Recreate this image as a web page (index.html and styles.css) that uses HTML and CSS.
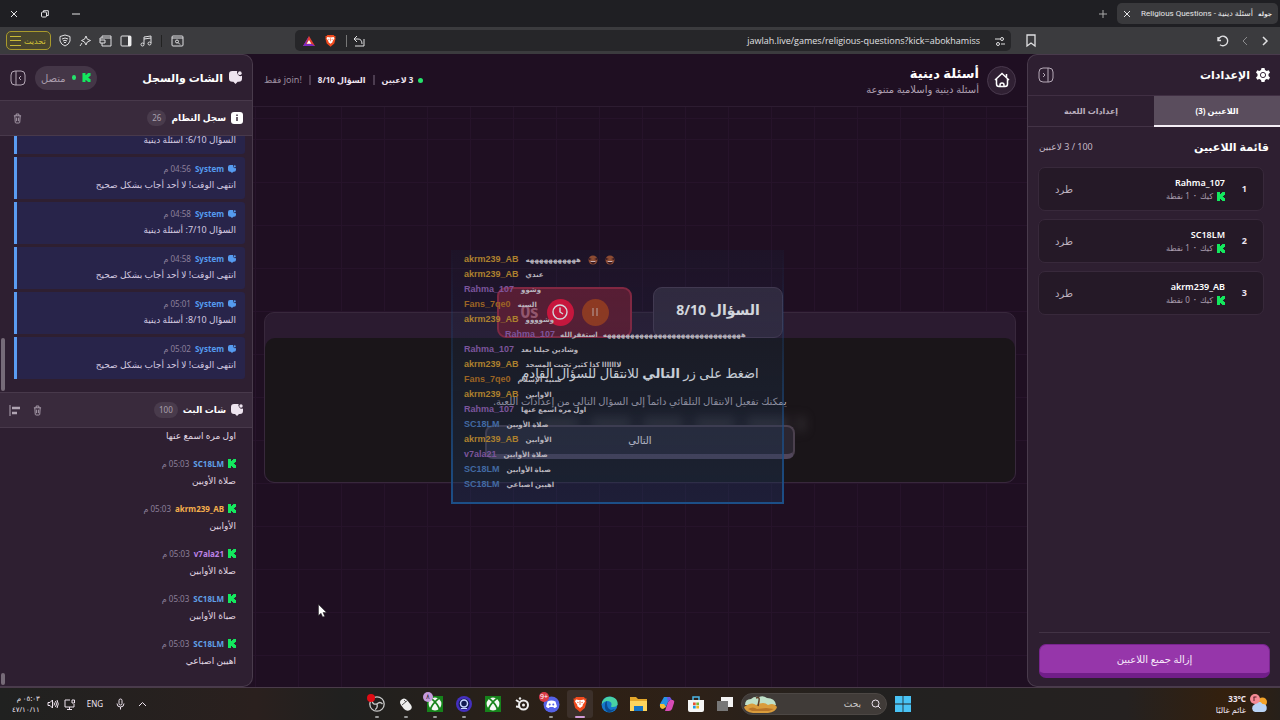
FILE: index.html
```html
<!DOCTYPE html>
<html lang="ar" dir="rtl">
<head>
<meta charset="utf-8">
<title>أسئلة دينية - Religious Questions</title>
<link rel="stylesheet" href="styles.css">
</head>
<body>
<svg class="defs" aria-hidden="true">
  <symbol id="kick" viewBox="0 0 9 10"><path fill="#14e85e" d="M0 0h3.4v2.3h1.1V1.1h1.2V0H9v3.4H7.8v1H6.7v1.2h1.1v1.1H9V10H5.7V8.9H4.5V7.7H3.4V10H0z"/></symbol>
  <symbol id="chat" viewBox="0 0 12 12"><path fill="currentColor" d="M3 0h4.6a3 3 0 0 0 .6 3.2A3 3 0 0 0 12 4.4V7a3 3 0 0 1-3 3H8l-2 2-2-2H3a3 3 0 0 1-3-3V3a3 3 0 0 1 3-3z"/><circle cx="10" cy="2" r="1.7" fill="currentColor"/></symbol>
  <symbol id="trash" viewBox="0 0 10 12"><path fill="none" stroke="currentColor" d="M1 3h8M3.5 3V1h3v2M2 3l.5 7.2q.1.8 1 .8h3q.9 0 1-.8L8 3M4 5v4M6 5v4"/></symbol>
  <symbol id="xbox" viewBox="0 0 16 16"><path fill="#16831b" d="M0 0h16v16H0z"/><circle cx="8" cy="8" r="6.4" fill="#f4f8f4"/><path fill="none" stroke="#16831b" stroke-width="1.800" d="M3.200 14Q5 8 11.800 2.400M12.800 14Q11 8 4.200 2.400"/></symbol>
  <symbol id="brave" viewBox="0 0 14 16"><path fill="#f04a1d" d="M3 1h8l1 1.400 1.600.2-.5 2.300.4 1-1.700 6L7 16l-4.800-4.100-1.700-6 .4-1L.4 2.600 2 2.400z"/><path fill="#fff" d="m3 3.500 4 .8 4-.8 1 2-2.500 3.400.3 1L7 12l-2.800-2.100.3-1L2 5.500z"/><path fill="#f04a1d" d="m3.800 5.800 2 .5-.8 1zM10.200 5.800l-2 .5.8 1zM6.600 5h.8v4h-.8z"/></symbol>
  <symbol id="laugh" viewBox="0 0 10 10"><circle cx="5" cy="5" r="4.500" fill="#8c4b32"/><path d="M1 3l3 1-3 1M9 3 6 4l3 1M2 6h6q-.8 3-3 3T2 6" fill="#371920"/><path fill="#cfb2b5" d="M2.500 6h5v1h-5z"/></symbol>
</svg>

<header class="titlebar">
  <div class="tab">
    <span class="favicon">جولة</span>
    <span class="tab-title">أسئلة دينية - Religious Questions</span>
    <button class="plain" aria-label="إغلاق التبويب"><svg width="8" height="8" viewBox="0 0 8 8"><path d="m1 1 6 6M7 1 1 7"/></svg></button>
  </div>
  <button class="plain newtab" aria-label="تبويب جديد"><svg width="8" height="8" viewBox="0 0 8 8"><path d="M4 0v8M0 4h8"/></svg></button>
  <div class="window-buttons">
    <button class="plain" aria-label="تصغير"><svg width="8" height="8" viewBox="0 0 8 8"><path d="M0 4h8"/></svg></button>
    <button class="plain" aria-label="استعادة"><svg width="8" height="8" viewBox="0 0 8 8"><rect x=".5" y="2" width="5" height="5" rx="1"/><path d="M2.500 2V.7h4.800v4.800H5.500"/></svg></button>
    <button class="plain" aria-label="إغلاق"><svg width="8" height="8" viewBox="0 0 8 8"><path d="m1 1 6 6M7 1 1 7"/></svg></button>
  </div>
</header>

<nav class="toolbar">
  <div class="nav-buttons">
    <button class="plain" aria-label="رجوع"><svg width="8" height="12" viewBox="0 0 8 12"><path stroke-width="1.500" d="m2 2 4 4-4 4"/></svg></button>
    <button class="plain dim" aria-label="تقدم"><svg width="8" height="12" viewBox="0 0 8 12"><path d="M6 2 2 6l4 4"/></svg></button>
    <button class="plain" aria-label="تحديث"><svg width="12" height="12" viewBox="0 0 12 12"><path stroke-width="1.400" d="M1.200 5A4.800 4.800 0 1 1 3 9.800M1 2v3.500h3"/></svg></button>
  </div>
  <div class="address">
    <button class="plain bookmark" aria-label="إشارة"><svg width="10" height="13" viewBox="0 0 10 13"><path stroke-width="1.300" d="M1 1h8v11L5 9l-4 3z"/></svg></button>
    <div class="urlbar">
      <svg width="10" height="10" viewBox="0 0 10 10"><path d="M0 3h5M6 8h4"/><circle cx="7" cy="3" r="1.500"/><circle cx="3" cy="8" r="1.500"/></svg>
      <input class="url" aria-label="العنوان" dir="ltr" value="jawlah.live/games/religious-questions?kick=abokhamiss">
      <button class="plain share" aria-label="مشاركة"><svg width="12" height="12" viewBox="0 0 12 12"><path d="M4 1 1 4l3 3M1 4h4q4 0 4 5M11 4v7H2"/></svg></button>
      <svg width="11" height="13"><use href="#brave"/></svg>
      <svg width="12" height="12" viewBox="0 0 12 12"><path fill="#e23d2c" stroke="none" d="m6 1 6 10H0z"/><path fill="#7a2ac0" stroke="none" d="m6 1-6 10h12L9 9H3z"/><path fill="#fff" stroke="none" d="m6 5 2.300 3.800H3.700z"/></svg>
    </div>
  </div>
  <div class="tools">
    <svg width="13" height="12" viewBox="0 0 13 12"><rect x="1" y="1" width="11" height="10" rx="1"/><path d="M1 3h11"/><circle cx="6" cy="6.500" r="1.500"/><path d="m7 7.500 2 2"/></svg>
    <i class="divider"></i>
    <svg width="12" height="12" viewBox="0 0 12 12"><path d="M4 9V2l7-1v7M4 4l7-1"/><circle cx="2.500" cy="9.500" r="1.500"/><circle cx="9.500" cy="8.500" r="1.500"/></svg>
    <svg width="12" height="12" viewBox="0 0 12 12"><rect x="1" y="1" width="10" height="10" rx="1"/><path fill="#eee" d="M8 1h3v10H8z"/></svg>
    <svg width="13" height="12" viewBox="0 0 13 12"><path d="M3 3V1h9v2M1 5V3h11v8H3M1 5h5v3H1zM3 8v3"/></svg>
    <svg width="12" height="12" viewBox="0 0 12 12"><path d="m7 1 1.300 3.200L11.500 5.500 8.300 7 7 10 5.500 7 2.500 5.500 5.500 4.200zM3 8l-2 3"/></svg>
    <svg width="12" height="13" viewBox="0 0 12 13"><path d="m6 1 5 1.500V7q-1 3.500-5 5-4-1.500-5-5V2.500zM3 5q3-2 6 0M4 7q2-1.500 4 0M5 8.500h2"/></svg>
    <button class="update">تحديث <span class="bars"></span></button>
  </div>
</nav>

<div class="page">
  <aside class="panel settings">
    <header class="panel-head">
      <svg class="gear" width="14" height="14" viewBox="0 0 14 14"><path fill="#fff" d="M5.500 0h3l.5 2 1.700.9 2-.7 1.300 2.300L12.500 6v2l1.500 1.500-1.300 2.300-2-.7-1.700.9-.5 2h-3L5 12l-1.700-.9-2 .7L0 9.500 1.500 8V6L0 4.500l1.300-2.300 2 .7L5 2z"/><circle cx="7" cy="7" r="2.600" fill="none" stroke="#3b2b3e"/></svg>
      <h2>الإعدادات</h2>
      <button class="plain collapse" aria-label="طي الإعدادات"><svg width="16" height="16" viewBox="0 0 16 16"><rect x="1" y="1" width="14" height="14" rx="4"/><path d="M10 1v14M5 6l2 2-2 2"/></svg></button>
    </header>
    <div class="tabs">
      <button class="tab-btn active">اللاعبين (3)</button>
      <button class="tab-btn">إعدادات اللعبة</button>
    </div>
    <div class="list-head"><h3>قائمة اللاعبين</h3><span>100 / 3 لاعبين</span></div>
    <ol class="players">
      <li><b class="rank">1</b><div><strong>Rahma_107</strong><small><svg width="8" height="9"><use href="#kick"/></svg>كيك <i>•</i> 1 نقطة</small></div><button class="plain kickbtn">طرد</button></li>
      <li><b class="rank">2</b><div><strong>SC18LM</strong><small><svg width="8" height="9"><use href="#kick"/></svg>كيك <i>•</i> 1 نقطة</small></div><button class="plain kickbtn">طرد</button></li>
      <li><b class="rank">3</b><div><strong>akrm239_AB</strong><small><svg width="8" height="9"><use href="#kick"/></svg>كيك <i>•</i> 0 نقطة</small></div><button class="plain kickbtn">طرد</button></li>
    </ol>
    <footer class="panel-foot"><button class="remove-all">إزالة جميع اللاعبين</button></footer>
  </aside>

  <main class="game">
    <header class="game-head">
      <a class="home" href="#" aria-label="الرئيسية"><svg width="16" height="16" viewBox="0 0 16 16"><path d="M1 8 8 1.500 15 8M12.500 2v3M2.500 7v5q0 2.500 2.500 2.500h6q2.500 0 2.500-2.500V7M6 14.500V13q0-2 2-2t2 2v1.500"/></svg></a>
      <div class="game-title"><h1>أسئلة دينية</h1><p>أسئلة دينية واسلامية متنوعة</p></div>
      <div class="status"><span class="dot"></span><b>3 لاعبين</b><i></i><b>السؤال 8/10</b><i></i><span class="muted">!join فقط</span></div>
    </header>
    <section class="stage">
      <div class="card">
        <div class="badges">
          <div class="badge question">السؤال 8/10</div>
          <div class="badge timer">
            <button class="round pause" aria-label="إيقاف مؤقت"><svg width="8" height="10" viewBox="0 0 8 10"><path d="M2 1v8M6 1v8"/></svg></button>
            <span class="round clock"><svg width="16" height="16" viewBox="0 0 16 16"><circle cx="8" cy="8" r="7"/><path d="M8 3.500V8l3 2"/></svg></span>
            <span class="seconds" dir="ltr">0s</span>
          </div>
        </div>
        <div class="card-band"></div>
        <div class="card-body">
          <p class="lead">اضغط على زر <b>التالي</b> للانتقال للسؤال القادم</p>
          <p class="hint">يمكنك تفعيل الانتقال التلقائي دائماً إلى السؤال التالي من إعدادات اللعبة.</p>
          <button class="next">التالي</button>
        </div>
        <div class="haze"></div>
      </div>
    </section>
    <ul class="overlay" dir="ltr">
      <li class="gold"><b>akrm239_AB</b><span dir="rtl">هههههههههههه</span><svg width="10" height="10"><use href="#laugh"/></svg><svg width="10" height="10"><use href="#laugh"/></svg></li>
      <li class="gold"><b>akrm239_AB</b><span>عندي</span></li>
      <li class="violet"><b>Rahma_107</b><span>وشوو</span></li>
      <li class="orange"><b>Fans_7qe0</b><span>السنه</span></li>
      <li class="gold"><b>akrm239_AB</b><span>وشوووو</span></li>
      <li class="violet indent"><b>Rahma_107</b><span>استغفرالله</span><span>ههههههههههههههههههههههههههههههه</span></li>
      <li class="violet"><b>Rahma_107</b><span>وشادين حيلنا بعد</span></li>
      <li class="gold"><b>akrm239_AB</b><span>لااااااا كذا كثير تحيت المسجد</span></li>
      <li class="orange"><b>Fans_7qe0</b><span>سنية الإسلام</span></li>
      <li class="gold"><b>akrm239_AB</b><span>الاوابين</span></li>
      <li class="violet"><b>Rahma_107</b><span>اول مره اسمع عنها</span></li>
      <li class="blue"><b>SC18LM</b><span>صلاة الأوبين</span></li>
      <li class="gold"><b>akrm239_AB</b><span>الأوابين</span></li>
      <li class="violet"><b>v7ala21</b><span>صلاة الأوابين</span></li>
      <li class="blue"><b>SC18LM</b><span>صباة الأوابين</span></li>
      <li class="blue"><b>SC18LM</b><span>اهيين اصباعي</span></li>
    </ul>
  </main>

  <aside class="panel chat">
    <header class="panel-head tall">
      <svg width="13" height="13"><use href="#chat"/></svg>
      <h2>الشات والسجل</h2>
      <span class="online"><svg width="9" height="9"><use href="#kick"/></svg><span class="dot"></span>متصل</span>
      <button class="plain" aria-label="طي الشات"><svg width="16" height="16" viewBox="0 0 16 16"><rect x="1" y="1" width="14" height="14" rx="4"/><path d="M6 1v14M11 6 9 8l2 2"/></svg></button>
    </header>
    <section class="log">
      <header class="sub-head">
        <svg width="12" height="12" viewBox="0 0 12 12"><rect width="12" height="12" rx="3" fill="#fff"/><path stroke="#3a2b3d" stroke-width="1.500" d="M6 5v4M6 2.500V4"/></svg>
        <h3>سجل النظام</h3><span class="count">26</span>
        <button class="plain" aria-label="مسح السجل"><svg width="9" height="11"><use href="#trash"/></svg></button>
      </header>
      <ul class="entries">
        <li><p class="meta"><svg width="8" height="8"><use href="#chat"/></svg><b>System</b><time>04:56 م</time></p><p>السؤال 6/10: أسئلة دينية</p></li>
        <li><p class="meta"><svg width="8" height="8"><use href="#chat"/></svg><b>System</b><time>04:56 م</time></p><p>انتهى الوقت! لا أحد أجاب بشكل صحيح</p></li>
        <li><p class="meta"><svg width="8" height="8"><use href="#chat"/></svg><b>System</b><time>04:58 م</time></p><p>السؤال 7/10: أسئلة دينية</p></li>
        <li><p class="meta"><svg width="8" height="8"><use href="#chat"/></svg><b>System</b><time>04:58 م</time></p><p>انتهى الوقت! لا أحد أجاب بشكل صحيح</p></li>
        <li><p class="meta"><svg width="8" height="8"><use href="#chat"/></svg><b>System</b><time>05:01 م</time></p><p>السؤال 8/10: أسئلة دينية</p></li>
        <li><p class="meta"><svg width="8" height="8"><use href="#chat"/></svg><b>System</b><time>05:02 م</time></p><p>انتهى الوقت! لا أحد أجاب بشكل صحيح</p></li>
      </ul>
      <span class="thumb"></span>
    </section>
    <section class="stream">
      <header class="sub-head">
        <svg width="12" height="12"><use href="#chat"/></svg>
        <h3>شات البث</h3><span class="count">100</span>
        <button class="plain" aria-label="مسح الشات"><svg width="9" height="11"><use href="#trash"/></svg></button>
        <button class="plain" aria-label="محاذاة"><svg width="11" height="11" viewBox="0 0 11 11"><path d="M1 0v11"/><path stroke-width="2.500" d="M3 3h8M3 8h5"/></svg></button>
      </header>
      <ul class="messages">
        <li class="m-violet"><p>اول مره اسمع عنها</p></li>
        <li class="m-blue"><p class="meta"><svg width="8" height="9"><use href="#kick"/></svg><b>SC18LM</b><time>05:03 م</time></p><p>صلاة الأوبين</p></li>
        <li class="m-gold"><p class="meta"><svg width="8" height="9"><use href="#kick"/></svg><b>akrm239_AB</b><time>05:03 م</time></p><p>الأوابين</p></li>
        <li class="m-violet"><p class="meta"><svg width="8" height="9"><use href="#kick"/></svg><b>v7ala21</b><time>05:03 م</time></p><p>صلاة الأوابين</p></li>
        <li class="m-blue"><p class="meta"><svg width="8" height="9"><use href="#kick"/></svg><b>SC18LM</b><time>05:03 م</time></p><p>صباة الأوابين</p></li>
        <li class="m-blue"><p class="meta"><svg width="8" height="9"><use href="#kick"/></svg><b>SC18LM</b><time>05:03 م</time></p><p>اهيين اصباعي</p></li>
      </ul>
      <span class="thumb small"></span>
    </section>
  </aside>
</div>

<footer class="taskbar">
  <div class="weather">
    <svg width="18" height="20" viewBox="0 0 18 20"><circle cx="12.500" cy="8" r="4.500" fill="#f3a329"/><path fill="#b9d3f5" d="M5 18a4 4 0 0 1-.5-7.500 4.500 4.500 0 0 1 8-.5A4 4 0 0 1 13 18z"/><circle cx="5" cy="5" r="5" fill="#f58a95"/><path d="M3.500 3h3M4 3v4" stroke="#5a1c28"/></svg>
    <div><b dir="ltr">33°C</b><span>غائم غالبًا</span></div>
  </div>
  <div class="apps">
    <button class="app" aria-label="ابدأ"><svg width="16" height="16" viewBox="0 0 16 16"><path fill="#49c3f5" d="M0 0h7.600v7.600H0zM8.400 0H16v7.600H8.400zM0 8.400h7.600V16H0zM8.400 8.400H16V16H8.400z"/></svg></button>
    <label class="search"><svg width="10" height="10" viewBox="0 0 10 10"><circle cx="4.500" cy="4.500" r="3.500"/><path d="m7 7 2.500 2.500"/></svg><input placeholder="بحث" aria-label="بحث">
      <svg width="34" height="17" viewBox="0 0 34 17"><path fill="#bfe0c8" d="M1 9Q1 3 7 3q3-3 8-2 4-2 8 1 8 0 9 7z"/><path fill="#d99c3c" d="M0 11q8-6 12-2 8-4 12 0 6-3 9 2-1 5-9 6H9Q1 16 0 11z"/><path fill="#b87528" d="M4 13q5-3 9 0l9-1 8 1-5 2H8z"/><path stroke="#5d3c26" stroke-width="1.500" fill="none" d="M12 2q4-2 3 3l-1 5"/></svg></label>
    <button class="app" aria-label="عرض المهام"><svg width="16" height="16" viewBox="0 0 16 16"><path fill="#f3f3f3" d="M4 1h12v10H4z"/><path fill="#777" d="M0 5h11v10H0z"/></svg></button>
    <button class="app" aria-label="المتجر"><svg width="16" height="16" viewBox="0 0 16 16"><path fill="none" stroke="#4bb7e8" stroke-width="1.500" d="M5 4V1h6v3"/><path fill="#f5f5f5" d="M0 4h16v10q0 2-2 2H2q-2 0-2-2z"/><path fill="#e8502f" d="M5 6.500h2.700v2.700H5z"/><path fill="#79b735" d="M8.300 6.500H11v2.700H8.300z"/><path fill="#1f9be0" d="M5 9.800h2.700v2.700H5z"/><path fill="#f2b41d" d="M8.300 9.800H11v2.700H8.300z"/></svg></button>
    <button class="app" aria-label="Copilot"><svg width="16" height="16" viewBox="0 0 16 16"><path fill="#2693e6" d="M5 1h6l-4 10H2q-2-1-1-3z"/><path fill="#f3bb35" d="M1 8l4 0 2 3-3 2q-2 0-3-2z"/><path fill="#d84bb5" d="M11 4h3q2 1 1 3l-2 6q-1 2-3 2H6l3-9z"/><path fill="#6f55dd" d="M8 1h3l2 3h-2L9 6z"/></svg></button>
    <button class="app" aria-label="الملفات"><svg width="17" height="16" viewBox="0 0 17 16"><path fill="#e3a72a" d="M0 1h6l2 2h9v12H0z"/><path fill="#fcd45d" d="M0 5h17v10H0z"/><path fill="#1675c5" d="M4 10h9v5H4z"/></svg></button>
    <button class="app" aria-label="Edge"><svg width="17" height="17" viewBox="0 0 17 17"><circle cx="8.500" cy="8.500" r="8" fill="#1678ca"/><path fill="#48d2a4" d="M1 6Q4 0 10 .8q7 1 6.600 8-2 3-6.600 2 2-5-3-5.800Q3 5 1 8z"/><path fill="#0b4b91" d="M4 8q0-2 2-3-1 7 4 9l4-1q-3 4-7 3Q3 14 4 8z"/></svg></button>
    <button class="app current" aria-label="Brave"><svg width="14" height="16"><use href="#brave"/></svg></button>
    <button class="app run" aria-label="Discord"><svg width="17" height="17" viewBox="0 0 17 17"><circle cx="8.500" cy="8.500" r="8" fill="#5562e8"/><path fill="#fff" d="M4.500 5.500q4-2 8 0l1.500 5q-2 2-3 1.500l-.6-1H6.600l-.6 1q-1 .5-3-1.500z"/><circle cx="6.700" cy="8.500" r="1" fill="#5562e8"/><circle cx="10.300" cy="8.500" r="1" fill="#5562e8"/></svg><span class="pip red" dir="ltr">9+</span></button>
    <button class="app" aria-label="SteelSeries"><svg width="16" height="16" viewBox="0 0 16 16"><circle cx="9.500" cy="9" r="4.500" fill="none" stroke="#eee" stroke-width="2"/><circle cx="9.500" cy="9" r="1.500" fill="#eee"/><path stroke="#eee" stroke-width="2" d="M5 6 2 4M6 11l-4-.5"/><circle cx="6" cy="2.500" r="1.200" fill="#eee"/></svg></button>
    <button class="app" aria-label="Xbox"><svg width="16" height="16"><use href="#xbox"/></svg></button>
    <button class="app run" aria-label="كاميرا"><svg width="16" height="16" viewBox="0 0 16 16"><circle cx="8" cy="8" r="8" fill="#4430c0"/><circle cx="8" cy="8" r="5.500" fill="#101a50"/><circle cx="8" cy="7.500" r="3.500" fill="none" stroke="#c9d5ff" stroke-width="1.500"/><path stroke="#c9d5ff" d="M5 12.500h6"/></svg></button>
    <button class="app run" aria-label="Xbox Game"><svg width="16" height="16"><use href="#xbox"/></svg><span class="pip lilac">٨</span></button>
    <button class="app run" aria-label="فأرة"><svg width="16" height="16" viewBox="0 0 16 16"><path fill="#eee" d="M3 4q3-3 6 0l4 5q2 3-1 5t-6-1L3 9Q1 6 3 4z"/><path fill="none" stroke="#555" d="m4 9 6-5M6 4l2 2"/></svg></button>
    <button class="app run" aria-label="OBS"><svg width="16" height="16" viewBox="0 0 16 16"><circle cx="8" cy="8" r="7.200" fill="none" stroke="#c9c9c9" stroke-width="1.300"/><path fill="none" stroke="#c9c9c9" stroke-width="1.300" d="M8 8q-4 1-5-3M8 8q3-3 5.500 0M8 8q1 4-2 5.500"/></svg><span class="pip rec"></span></button>
  </div>
  <div class="tray">
    <svg width="9" height="6" viewBox="0 0 9 6"><path d="m1 5 3.500-3.500L8 5"/></svg>
    <svg width="9" height="12" viewBox="0 0 9 12"><rect x="3" y="1" width="3" height="6" rx="1.500"/><path d="M1 5.500Q1 9 4.500 9T8 5.500M4.500 9v2.500"/></svg>
    <span>ENG</span>
    <div class="tray-pair"><svg width="11" height="11" viewBox="0 0 11 11"><path d="M6 1H1v7h9V5M3 10.500h5M8 1h2.500v3H8zM5.500 8v2"/></svg>
    <svg width="12" height="10" viewBox="0 0 12 10"><path d="M1 3.500h2L5.500 1v8L3 6.500H1zM7 3.500q1 1.500 0 3M8.500 2q2 3 0 6M10 1q2.500 4 0 8"/></svg></div>
    <time class="clocktext">٠٥:٠٣ م<br>٤٧/١٠/١١</time>
  </div>
</footer>
<svg class="cursor" width="9" height="14" viewBox="0 0 9 14" aria-hidden="true"><path fill="#fff" stroke="#222" stroke-width=".5" d="M.5.500v11l2.500-2.300L4.700 13l2-.8L5 8.500h3.500z"/></svg>
</body>
</html>
```
FILE: styles.css
```css
* { box-sizing: border-box; }
body {
  margin: 0; height: 100vh; overflow: hidden; position: relative;
  display: flex; flex-direction: column;
  background: #1f0f22; color: #eee4ef;
  font: 10px/14px "Noto Sans", "DejaVu Sans", sans-serif;
}
h1, h2, h3, p, ul, ol { margin: 0; padding: 0; }
ul, ol { list-style: none; }
svg { flex: none; fill: none; stroke: currentColor; display: block; overflow: visible; }
symbol path[fill="currentColor"], symbol circle[fill="currentColor"], svg [fill]:not([fill="none"]):not([stroke]) { stroke: none; }
button, input { font: inherit; color: inherit; }
.plain { border: 0; background: none; padding: 0; display: flex; align-items: center; }
.defs { position: absolute; width: 0; height: 0; }

.titlebar { flex: none; height: 27px; background: #1f1f23; display: flex; align-items: center; padding: 0 2px 0 10px; gap: 10px; color: #e5e5e7; }
.tab { display: flex; align-items: center; gap: 5px; height: 21px; padding: 0 6px; background: #39393c; border-radius: 5px; width: 161px; }
.favicon { font-size: 6px; font-weight: bold; }
.tab-title { flex: 1; white-space: nowrap; font-family: Roboto, "DejaVu Sans", sans-serif; font-size: 8px; }
.newtab { color: #aaa; }
.window-buttons { margin-right: auto; display: flex; gap: 23px; }

.toolbar { flex: none; height: 27px; background: #3b3b3e; display: grid; grid-template-columns: 233px 1fr 289px; align-items: center; padding: 0 11px 0 6px; color: #e0e0e2; }
.nav-buttons { display: flex; gap: 12px; align-items: center; }
.dim { color: #8b8b8d; }
.address { display: flex; align-items: center; gap: 15px; }
.urlbar { flex: 1; height: 21px; border-radius: 5px; background: #262629; display: flex; align-items: center; gap: 10px; padding: 0 6px 0 8px; }
.url { flex: 1; min-width: 0; border: 0; background: none; text-align: right; padding: 0 5px 0 0; font-family: "Open Sans", sans-serif; font-size: 9px; }
.share { border-left: 1px solid #777; padding-left: 6px; }
.tools { display: flex; justify-content: flex-end; align-items: center; gap: 8px; }
.divider { width: 1px; height: 12px; background: #222; margin: 0 1px; }
.update { height: 19px; border: 1px solid #a99a2c; border-radius: 5px; background: #49462e; color: #d8c735; font-size: 8px; line-height: 12px; padding: 0 4px 0 3px; display: flex; align-items: center; gap: 3px; }
.bars { width: 11px; height: 10px; border: solid #c8b936; border-width: 1px 0; background: linear-gradient(#c8b936, #c8b936) center / 100% 1px no-repeat; }

.page { flex: 1; min-height: 0; display: grid; grid-template-columns: 253px 1fr 253px; border-bottom: 1px solid #4a3b4a; }
.panel { min-height: 0; background: #2e1f31; border: 1px solid #493b4c; display: flex; flex-direction: column; overflow: hidden; }
.settings { border-top-left-radius: 10px; border-bottom-left-radius: 10px; border-right: 0; }
.chat { border-top-right-radius: 10px; border-bottom-right-radius: 10px; border-left: 0; }
.panel-head { height: 41px; flex: none; display: flex; align-items: center; gap: 6px; padding: 0 10px; border-bottom: 1px solid #402f43; }
.panel-head h2 { font-size: 11px; line-height: 16px; color: #fff; }
.collapse { margin-right: auto; color: #b5a9b7; }
.tabs { flex: none; display: grid; grid-template-columns: 1fr 1fr; height: 31px; }
.tab-btn { border: 0; border-bottom: 1px solid #433346; background: none; color: #bcb0bf; font-size: 8px; font-weight: bold; padding: 0; }
.tab-btn.active { background: #5a4d5d; color: #fff; border-bottom: 2px solid #f4eef5; }
.list-head { display: flex; justify-content: space-between; align-items: center; padding: 12px 11px; color: #c4b9c6; font-size: 9px; line-height: 16px; }
.list-head h3 { font-size: 11px; color: #fff; }
.players { display: flex; flex-direction: column; gap: 8px; padding: 0 16px 0 10px; }
.players li { height: 44px; display: flex; align-items: center; padding: 0 16px; gap: 18px; border: 1px solid #38293b; border-radius: 7px; background: #251927; }
.rank { font-size: 9px; width: 4px; }
.players strong { display: block; color: #fff; font-size: 9px; line-height: 14px; font-weight: 600; text-align: right; }
.players small { display: flex; align-items: center; gap: 4px; font-size: 8px; line-height: 12px; color: #a99cad; }
.players i { font-style: normal; font-size: 6px; }
.kickbtn { margin-right: auto; color: #bdb1bf; font-size: 10px; }
.panel-foot { margin: auto 10px 0 11px; padding: 11px 0 8px; border-top: 1px solid #423345; }
.remove-all { width: 100%; height: 34px; border: 1px solid #79258f; border-bottom: 5px solid #711e89; border-radius: 7px; background: #9636aa; color: #f7e9fa; font-size: 10px; padding: 0; }

.game { min-width: 0; display: flex; flex-direction: column; position: relative; }
.game-head { flex: none; height: 53px; display: flex; align-items: center; gap: 8px; padding: 0 11px; border-bottom: 1px solid #2d1c31; }
.home { width: 29px; height: 29px; border: 1px solid #49394d; border-radius: 50%; background: #302033; display: grid; place-items: center; color: #fff; }
.home svg { stroke-width: 1.5; }
.game-title h1 { font-size: 13px; line-height: 17px; color: #fff; }
.game-title p { font-size: 10px; line-height: 14px; color: #b0a1b3; }
.status { margin-right: auto; display: flex; align-items: center; gap: 5px; font-size: 8px; }
.status i { width: 2px; height: 10px; background: #4c3c50; margin: 0 2px; }
.dot { width: 5px; height: 5px; border-radius: 50%; background: #25e26b; }
.muted { color: #9b8c9e; font-size: 9px; }
.stage { flex: 1; display: flex; flex-direction: column; justify-content: center; padding: 0 11px;
  background: repeating-linear-gradient(90deg, #26132a 0 1px, transparent 1px 43px) 2px 0, repeating-linear-gradient(#26132a 0 1px, transparent 1px 43px) 0 32px, #1f0f22; }
.card { position: relative; border: 1px solid #38283c; border-radius: 10px; background: #2b1b30; }
.badges { position: absolute; top: -26px; left: 0; right: 0; display: flex; justify-content: center; gap: 21px; }
.badge { height: 51px; border-radius: 9px; display: flex; align-items: center; justify-content: center; gap: 8px; }
.question { width: 130px; background: #35293c; border: 1px solid #4b3c52; color: #fff; font-size: 14px; font-weight: bold; padding-bottom: 5px; }
.timer { width: 135px; background: #641a2e; border: 2px solid #98263f; }
.round { width: 27px; height: 27px; border: 0; border-radius: 50%; padding: 0; display: grid; place-items: center; color: #fff; }
.pause { background: #a83c18; color: #cf9a88; }
.clock { background: #f01038; }
.round svg { stroke-width: 1.4; }
.seconds { color: #b06075; font-size: 17px; font-weight: bold; }
.card-band { height: 25px; }
.card-body { border-radius: 10px; background: #1a1519; display: flex; flex-direction: column; align-items: center; padding: 26px 0 23px; }
.lead { font-size: 13px; line-height: 19px; color: #fff; margin-bottom: 10px; position: relative; z-index: 2; }
.hint { font-size: 10px; line-height: 16px; color: #b6adb8; margin-bottom: 16px; position: relative; z-index: 2; }
.next { width: 310px; height: 34px; border: 2px solid #4b404e; border-bottom: 5px solid #51465b; border-radius: 8px; background: #2b2631; color: #f1ebf3; font-size: 10px; padding: 0; position: relative; z-index: 1; }
.haze { position: absolute; top: 103px; left: 275px; right: 210px; height: 16px; filter: blur(5px);
  background: repeating-linear-gradient(90deg, #47424880 0 38px, #28232966 38px 52px); }

.overlay { position: absolute; z-index: 3; left: 198px; top: 196px; width: 333px; height: 254px; padding: 0 11px; color: #b8b4bd;
  border: solid #1c4f88; border-width: 0 2px 2px; border-image: linear-gradient(#1c4f8800, #1c4f8840 40%, #1c4f88) 2;
  background: linear-gradient(#182a4626, #1c3a6059);
  font: bold 7px/15px "Liberation Sans", "DejaVu Sans", sans-serif; white-space: nowrap; overflow: hidden; }
.overlay li { display: flex; align-items: center; gap: 7px; height: 15px; }
.overlay li:first-child { margin-top: 2px; }
.overlay b { font-size: 9px; }
.overlay .indent { padding-left: 41px; gap: 5px; }
.gold b { color: #ad812e; }
.violet b { color: #7c559c; }
.orange b { color: #9c6424; }
.blue b { color: #426aa3; }

.tall { height: 45px; border-bottom: 0; padding: 0 10px; }
.online { margin-right: auto; height: 24px; border-radius: 12px; background: #443647; padding: 0 6px; display: flex; align-items: center; gap: 6px; color: #a99cac; width: 62px; font-size: 10px; white-space: nowrap; }
.tall .plain { margin-right: 3px; color: #b5a9b7; }
.log { flex: none; height: 292px; display: flex; flex-direction: column; position: relative; }
.stream { flex: 1; min-height: 0; display: flex; flex-direction: column; position: relative; }
.sub-head { flex: none; height: 36px; display: flex; align-items: center; gap: 5px; padding: 0 9px 0 8px; background: #392a3c; border: solid #48394b; border-width: 1px 0; }
.stream .sub-head { padding-left: 5px; }
.sub-head h3 { font-size: 9px; color: #fff; }
.count { min-width: 18px; height: 16px; line-height: 16px; text-align: center; padding: 0 5px; border-radius: 8px; background: #493b4c; color: #aaa0ac; font-size: 8px; }
.sub-head .plain { color: #b0a4b2; width: 18px; justify-content: center; }
.count + .plain { margin-right: auto; }
.entries, .messages { flex: 1; min-height: 0; overflow: hidden; display: flex; flex-direction: column; justify-content: flex-end; }
.entries { gap: 3px; padding: 0 7px 13px 14px; }
.entries li { flex: none; height: 42px; padding: 4px 9px; border-left: 3px solid #5a9cf2; border-radius: 0 3px 3px 0; background: #28244a; color: #d3c9e0; font-size: 9px; line-height: 16px; }
.meta { display: flex; align-items: center; gap: 4px; font-size: 8px; }
.meta time { color: #8d809a; }
.entries .meta { color: #559bef; }
.messages { gap: 11px; padding: 0 16px 17px; }
.messages li { flex: none; font-size: 9px; line-height: 17px; color: #e0d6e2; }
.m-violet b { color: #bc82e6; }
.m-blue b { color: #609fe6; }
.m-gold b { color: #f5ae4c; }
.thumb { position: absolute; left: 1px; bottom: 1px; width: 4px; height: 53px; border-radius: 2px; background: #766b78; }
.thumb.small { height: 12px; }

.taskbar { flex: none; height: 32px; display: grid; grid-template-columns: 1fr auto 1fr; align-items: center; padding: 0 12px;
  background: linear-gradient(90deg, #202120, #2a201e 20%, #20201f 27%, #2e2015 47%, #2d2118 55%, #222120 68%, #252120 88%, #34200d 96%, #27201a); }
.weather { display: flex; gap: 4px; align-items: center; font-size: 8px; line-height: 11px; }
.weather b, .weather span { display: block; text-align: right; white-space: nowrap; }
.apps { display: flex; gap: 3px; align-items: center; }
.app { width: 26px; height: 28px; border: 0; border-radius: 3px; background: none; padding: 0; display: grid; place-items: center; position: relative; }
.run::after, .current::after { content: ""; position: absolute; bottom: 0; left: 11px; width: 4px; height: 2px; border-radius: 1px; background: #999; }
.current { background: #3c302a; }
.current::after { left: 8px; width: 10px; background: #d29bd8; }
.pip { position: absolute; left: 1px; top: 2px; width: 10px; height: 10px; border-radius: 50%; font-size: 7px; line-height: 10px; color: #fff; }
.red { background: #d83a46; }
.lilac { background: #c59add; color: #222; }
.rec { background: #e00b14; width: 8px; height: 8px; left: 3px; top: 4px; }
.search { width: 146px; height: 22px; border-radius: 11px; background: #403b38; border: 1px solid #4c4744; display: flex; align-items: center; gap: 10px; padding: 0 5px 0 2px; }
.search input { min-width: 0; flex: 1; border: 0; background: none; padding: 0; font-size: 9px; }
.search input::placeholder { color: #ccc; opacity: 1; }
.tray { justify-self: end; display: flex; align-items: center; gap: 13px; font-size: 8px; }
.tray-pair { display: flex; gap: 5px; margin-left: -6px; margin-right: -1px; }
.clocktext { font-size: 7px; line-height: 11px; text-align: right; white-space: nowrap; }
.cursor { position: absolute; left: 318px; top: 604px; }
```
